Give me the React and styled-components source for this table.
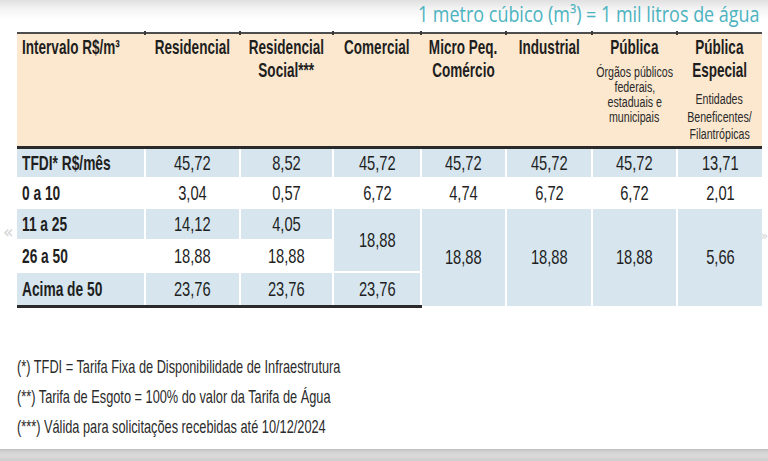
import React from 'react'
import styled, { createGlobalStyle } from 'styled-components'

const NARROW = '"Liberation Sans Narrow", "Arial Narrow", "Liberation Sans", Arial, sans-serif'

const GlobalStyle = createGlobalStyle`
  html, body { margin: 0; padding: 0; background: #fff; }
  body { font-family: ${NARROW}; color: #222; }
`

const Page = styled.div`
  position: relative;
  width: 768px;
  height: 461px;
  overflow: hidden;
  display: flex;
  flex-direction: column;
  background: linear-gradient(#e0e0e0 0, #f4f4f4 9px, #fff 20px);
`

const TitleBar = styled.div`
  height: 32px;
  display: flex;
  justify-content: flex-end;
  align-items: flex-start;
  padding-right: 8px;
  box-sizing: border-box;
`

const Title = styled.span`
  display: inline-block;
  white-space: nowrap;
  font-family: "Open Sans", "Noto Sans", sans-serif;
  font-size: 21px;
  line-height: 29px;
  color: #4cb3c0;
  transform: scaleX(0.855);
  transform-origin: right center;
`

const TableWrap = styled.div`
  padding-left: 17px;
`

const Table = styled.table`
  width: 745px;
  table-layout: fixed;
  border-collapse: collapse;
  border-spacing: 0;
`

const Col = styled.col`
  width: ${p => p.$w}px;
`

const HeadCell = styled.th`
  position: relative;
  background: #fbe8cf;
  border-top: 2px solid #4d4d4d;
  border-bottom: 3px solid #2a2a2a;
  height: 111px;
  padding: 1px 0 0 ${p => (p.$left ? 5 : 0)}px;
  vertical-align: top;
  color: #1e1e1e;
  &:not(:first-child)::before {
    content: '';
    position: absolute;
    left: -1px;
    top: -3px;
    width: 2px;
    height: 4px;
    background: #3a3a3a;
  }
`

const HeadStack = styled.div`
  display: flex;
  flex-direction: column;
  align-items: ${p => (p.$left ? 'flex-start' : 'center')};
`

const HeadTitle = styled.div`
  white-space: nowrap;
  font-size: 21px;
  line-height: 23px;
  font-weight: 700;
  transform: scaleX(0.645);
  transform-origin: ${p => (p.$left ? 'left' : 'center')};
`

const HeadNote = styled.div`
  white-space: nowrap;
  font-size: 14px;
  font-weight: 400;
  line-height: ${p => p.$lh}px;
  margin-top: ${p => p.$gap}px;
  color: #2a2a2a;
  transform: scaleX(0.76);
`

const Row = styled.tr`
  height: ${p => p.$h}px;
  &:last-child td {
    border-bottom: 3px solid #2a2a2a;
  }
`

const Cell = styled.td`
  background: ${p => (p.$tone === 'blue' ? '#d6e5ee' : '#ffffff')};
  border: 2px solid #fff;
  padding: 0 0 0 ${p => (p.$label ? 5 : 0)}px;
  vertical-align: middle;
  &:first-child { border-left: 0; }
  &:last-child { border-right: 0; }
`

const CellBox = styled.div`
  display: flex;
  justify-content: ${p => (p.$label ? 'flex-start' : 'center')};
`

const CellText = styled.span`
  display: inline-block;
  white-space: nowrap;
  font-size: 21px;
  font-weight: ${p => (p.$label ? 700 : 400)};
  line-height: 24px;
  color: #1f1f1f;
  transform: scaleX(${p => (p.$label ? 0.655 : 0.7)});
  transform-origin: ${p => (p.$label ? 'left' : 'center')};
`

const Notes = styled.div`
  margin-top: 44px;
  padding-left: 17px;
  display: flex;
  flex-direction: column;
  align-items: flex-start;
`

const Note = styled.div`
  white-space: nowrap;
  font-size: 18.5px;
  line-height: 30px;
  color: #2b2b2b;
  transform: scaleX(0.69);
  transform-origin: left center;
`

const BottomBand = styled.div`
  margin-top: auto;
  height: 12px;
  background: linear-gradient(#bfbfbf 0, #d4d4d4 3px, #dadada 7px, #cdcdcd 100%);
`

const Pager = styled.span`
  position: absolute;
  top: ${p => p.$top}px;
  ${p => (p.$side === 'left' ? 'left: 3px;' : 'right: 0;')}
  font-family: "DejaVu Sans", sans-serif;
  font-size: ${p => (p.$side === 'left' ? 17 : 12)}px;
  line-height: 20px;
  color: #d2d2d2;
`

const columns = [
  { w: 128, title: ['Intervalo R$/m³'], left: true },
  { w: 95, title: ['Residencial'] },
  { w: 93, title: ['Residencial', 'Social***'] },
  { w: 88, title: ['Comercial'] },
  { w: 85, title: ['Micro Peq.', 'Comércio'] },
  { w: 86, title: ['Industrial'] },
  { w: 85, title: ['Pública'], note: ['Órgãos públicos', 'federais,', 'estaduais e', 'municipais'], lh: 15, gap: 7 },
  { w: 85, title: ['Pública', 'Especial'], note: ['Entidades', 'Beneficentes/', 'Filantrópicas'], lh: 17.5, gap: 10 },
]

const rows = [
  { label: 'TFDI* R$/mês', tone: 'blue', h: 30, cells: ['45,72', '8,52', '45,72', '45,72', '45,72', '45,72', '13,71'] },
  { label: '0 a 10', tone: 'white', h: 30, cells: ['3,04', '0,57', '6,72', '4,74', '6,72', '6,72', '2,01'] },
  {
    label: '11 a 25', tone: 'blue', h: 32,
    cells: ['14,12', '4,05',
      { v: '18,88', span: 2 }, { v: '18,88', span: 3 }, { v: '18,88', span: 3 },
      { v: '18,88', span: 3 }, { v: '5,66', span: 3 }],
  },
  { label: '26 a 50', tone: 'white', h: 32, cells: ['18,88', '18,88'] },
  { label: 'Acima de 50', tone: 'blue', h: 35, cells: ['23,76', '23,76', '23,76'] },
]

const notes = [
  '(*) TFDI = Tarifa Fixa de Disponibilidade de Infraestrutura',
  '(**) Tarifa de Esgoto = 100% do valor da Tarifa de Água',
  '(***) Válida para solicitações recebidas até 10/12/2024',
]

export default function App() {
  return (
    <Page>
      <GlobalStyle />
      <TitleBar>
        <Title>1 metro cúbico (m³) = 1 mil litros de água</Title>
      </TitleBar>

      <TableWrap>
        <Table>
          <colgroup>
            {columns.map((c, i) => <Col key={i} $w={c.w} />)}
          </colgroup>
          <thead>
            <tr>
              {columns.map((c, i) => (
                <HeadCell key={i} $left={c.left}>
                  <HeadStack $left={c.left}>
                    {c.title.map(t => <HeadTitle key={t} $left={c.left}>{t}</HeadTitle>)}
                    {c.note && c.note.map((n, j) => (
                      <HeadNote key={n} $lh={c.lh} $gap={j === 0 ? c.gap : 0}>{n}</HeadNote>
                    ))}
                  </HeadStack>
                </HeadCell>
              ))}
            </tr>
          </thead>
          <tbody>
            {rows.map(r => (
              <Row key={r.label} $h={r.h}>
                <Cell $tone={r.tone} $label>
                  <CellBox $label><CellText $label>{r.label}</CellText></CellBox>
                </Cell>
                {r.cells.map((c, i) => {
                  const cell = typeof c === 'string' ? { v: c } : c
                  return (
                    <Cell key={i} rowSpan={cell.span || 1} $tone={cell.span ? 'blue' : r.tone}>
                      <CellBox><CellText>{cell.v}</CellText></CellBox>
                    </Cell>
                  )
                })}
              </Row>
            ))}
          </tbody>
        </Table>
      </TableWrap>

      <Notes>
        {notes.map(n => <Note key={n}>{n}</Note>)}
      </Notes>

      <BottomBand />

      <Pager $side="left" $top={222}>«</Pager>
      <Pager $side="right" $top={226}>»</Pager>
    </Page>
  )
}
